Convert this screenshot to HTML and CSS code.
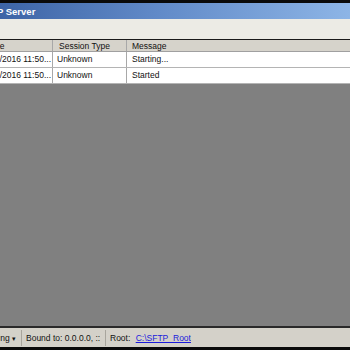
FILE: index.html
```html
<!DOCTYPE html>
<html lang="en">
<head>
    <meta charset="UTF-8">
    <title>SFTP Server</title>
    <link rel="stylesheet" href="styles.css">
</head>
<body>
    <div class="window">
        <div class="titlebar"><span class="title">SFTP Server</span></div>
        <div class="toolbar"></div>

        <!-- Log list (scrolled a little to the right) -->
        <div class="log">
            <div class="row head">
                <div class="cell c1">Time</div>
                <div class="cell c2">Session Type</div>
                <div class="cell c3">Message</div>
            </div>
            <div class="row">
                <div class="cell c1">11/14/2016 11:50...</div>
                <div class="cell c2">Unknown</div>
                <div class="cell c3">Starting...</div>
            </div>
            <div class="row">
                <div class="cell c1">11/14/2016 11:50...</div>
                <div class="cell c2">Unknown</div>
                <div class="cell c3">Started</div>
            </div>
            <div class="empty"></div>
        </div>

        <!-- Status bar -->
        <div class="statusbar">
            <div class="pane p1">Running <span class="arrow">&#9662;</span></div>
            <div class="pane p2">Bound to: 0.0.0.0, ::</div>
            <div class="pane p3">Root: <a href="#">C:\SFTP_Root</a></div>
        </div>
    </div>
</body>
</html>
```

FILE: styles.css
```css
* {
    margin: 0;
    padding: 0;
    box-sizing: border-box;
}

body {
    width: 350px;
    height: 350px;
    overflow: hidden;
    background-color: #0a0a0a;
    font-family: 'Liberation Sans', Arial, sans-serif;
    font-size: 8.5px;
    color: #111;
}

.window {
    display: flex;
    flex-direction: column;
    height: 350px;
    padding: 3px 0;
}

.titlebar {
    height: 16px;
    background: linear-gradient(to right, #3d64a6, #618ac8 45%, #8db5e6);
    overflow: hidden;
}

.title {
    display: block;
    margin-left: -21px;
    line-height: 17px;
    color: #fff;
    font-weight: bold;
    font-size: 9.5px;
    white-space: nowrap;
}

.toolbar {
    height: 21px;
    background-color: #ecebe5;
    border-bottom: 1px solid #1a1a1a;
}

/* Log list */
.log {
    flex: 1;
    display: flex;
    flex-direction: column;
    background-color: #808080;
}

.row {
    display: flex;
    height: 16px;
    background-color: #fff;
    border-bottom: 1px solid #b4b4b4;
}

.row.head {
    height: 12px;
    background-color: #d6d3cb;
    border-bottom: 1px solid #a0a0a0;
}

.cell {
    line-height: 15px;
    white-space: nowrap;
    overflow: hidden;
    border-right: 1px solid #a8a8a8;
}

.head .cell {
    line-height: 12px;
}

.c1 {
    width: 53px;
    text-indent: -21px;
}

.head .c1 {
    text-indent: -14px;
}

.c2 {
    width: 74px;
    padding-left: 4px;
}

.c3 {
    flex: 1;
    padding-left: 5px;
    border-right: none;
}

.head .c2 {
    padding-left: 6px;
}

.empty {
    flex: 1;
}

/* Status bar */
.statusbar {
    display: flex;
    height: 21px;
    background-color: #d4d1c9;
    border-top: 2px solid #2a2a2a;
    align-items: center;
}

.pane {
    height: 16px;
    line-height: 16px;
    white-space: nowrap;
    overflow: hidden;
    border-right: 1px solid #a8a59d;
}

.p1 {
    width: 22px;
    text-indent: -22px;
}

.arrow {
    font-size: 7px;
}

.p2 {
    width: 84px;
    padding-left: 4px;
}

.p3 {
    padding-left: 4px;
    border-right: none;
}

.p3 a {
    color: #1a1adc;
    margin-left: 3px;
}
```
